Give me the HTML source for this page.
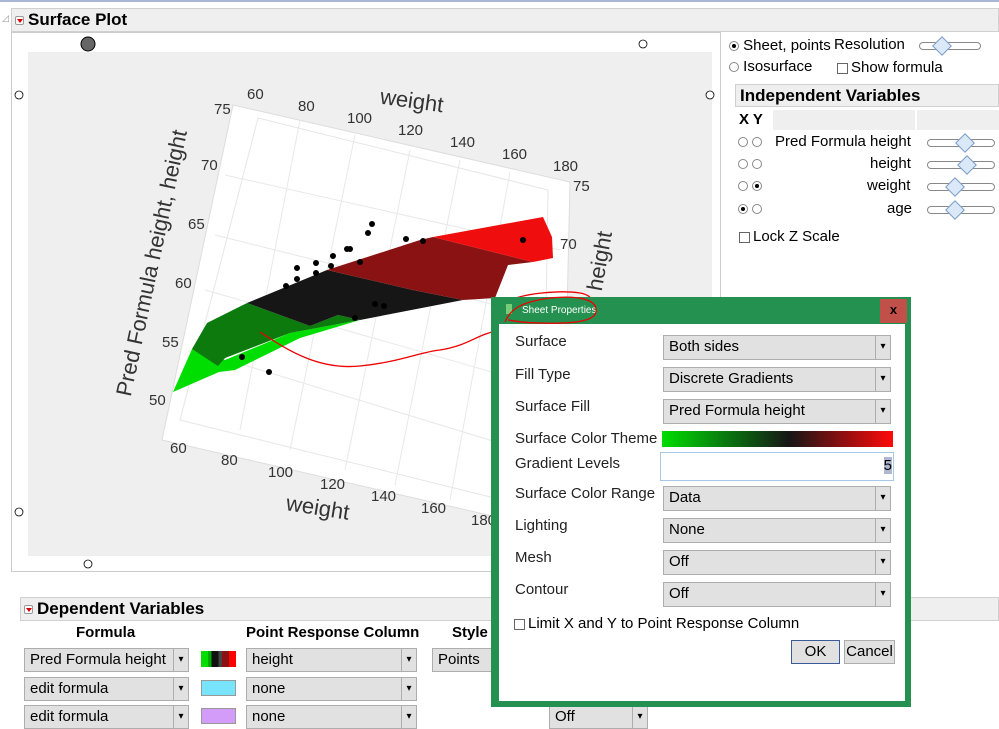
<!DOCTYPE html>
<html><head><meta charset="utf-8"><style>
*{box-sizing:border-box}
body{margin:0;width:999px;height:721px;overflow:hidden;background:#fff;font-family:"Segoe UI","Liberation Sans","DejaVu Sans",sans-serif;font-size:15px;color:#000;position:relative}
.a{position:absolute;white-space:nowrap}
.hdr{position:absolute;background:#efefef;border:1px solid #d0d0d0;font-weight:bold;font-size:17px;padding-left:16px;line-height:22px}
.tri{position:absolute;left:3px;top:7px;width:9px;height:9px;background:#fff;border:1px solid #999;border-radius:2px}
.tri:after{content:"";position:absolute;left:1px;top:2px;border-left:3px solid transparent;border-right:3px solid transparent;border-top:4px solid #d00}
.dd{position:absolute;background:#e1e1e1;border:1px solid #adadad;font-size:15px;line-height:22px;padding-left:5px;white-space:nowrap}
.dd:after{content:"▾";position:absolute;right:0;top:0;width:14px;height:100%;border-left:1px solid #adadad;font-size:10px;text-align:center;line-height:22px}
.lbl{position:absolute;left:515px;font-size:15px;color:#222;white-space:nowrap}
.rad{display:inline-block;width:10px;height:10px;border:1px solid #888;border-radius:50%;position:relative;vertical-align:middle}
.rad.on:after{content:"";position:absolute;left:2px;top:2px;width:4px;height:4px;border-radius:50%;background:#000}
.cb{display:inline-block;width:11px;height:11px;border:1px solid #666;vertical-align:middle;margin-right:3px}
.sl{position:absolute;height:8px;border:1px solid #888;border-radius:4px;background:#fff}
.dm{position:absolute;width:14px;height:14px;background:#dbe8f8;border:1px solid #7a9cc8;transform:rotate(45deg)}
.ax{position:absolute;font-size:15px;color:#333;white-space:nowrap}
</style></head><body>
<div class="a" style="left:0;top:0;width:999px;height:2px;background:#a9b5d6"></div>
<div class="hdr" style="left:11px;top:8px;width:988px;height:24px"><div class="tri"></div>Surface Plot</div>
<div class="a" style="left:2px;top:13px;font-size:9px;color:#999">◿</div>
<div class="a" style="left:11px;top:32px;width:710px;height:540px;border:1px solid #ccc"></div>
<div class="a" style="left:28px;top:52px;width:684px;height:504px;background:#efefef"></div>
<svg class="a" style="left:0;top:0" width="999" height="721">
<polygon points="233,105 570,182 562,532 162,440" fill="#fff" stroke="#ddd"/>
<polygon points="258,118 548,190 543,510 180,420" fill="none" stroke="#e6e6e6"/>
<g stroke="#e8e8e8" fill="none">
<line x1="300" y1="120" x2="240" y2="430"/><line x1="355" y1="135" x2="290" y2="450"/><line x1="410" y1="150" x2="345" y2="470"/><line x1="460" y1="160" x2="395" y2="485"/><line x1="510" y1="172" x2="450" y2="500"/>
<line x1="225" y1="175" x2="560" y2="250"/><line x1="215" y1="235" x2="555" y2="320"/><line x1="205" y1="290" x2="555" y2="390"/><line x1="195" y1="350" x2="555" y2="460"/>
</g>
<circle cx="88" cy="44" r="7" fill="#666" stroke="#000"/>
<g fill="#fff" stroke="#000" stroke-width="0.8"><circle cx="643" cy="44" r="4"/><circle cx="19" cy="95" r="4"/><circle cx="710" cy="95" r="4"/><circle cx="19" cy="512" r="4"/><circle cx="88" cy="564" r="4"/></g>
<polygon points="173,392 192,349 225,360 290,333 360,320 300,338 235,370 219,372" fill="#00dd00"/>
<polygon points="192,349 207,323 247,303 310,326 338,315 360,320 290,333 225,358 218,366" fill="#0c7a0c"/>
<polygon points="247,303 327,270 413,290 463,300 360,320 338,315 310,326" fill="#161616"/>
<polygon points="327,270 420,240 433,237 533,262 508,265 495,298 463,300 413,290" fill="#8b1212"/>
<polygon points="433,237 543,217 552,237 553,258 533,262" fill="#f00d0d"/>
<g fill="#000">
<circle cx="372" cy="224" r="3"/><circle cx="368" cy="233" r="3"/><circle cx="406" cy="239" r="3"/><circle cx="423" cy="241" r="3"/><circle cx="523" cy="240" r="3"/><circle cx="347" cy="249" r="3"/><circle cx="350" cy="249" r="3"/><circle cx="333" cy="256" r="3"/><circle cx="331" cy="266" r="3"/><circle cx="316" cy="263" r="3"/><circle cx="316" cy="273" r="3"/><circle cx="297" cy="268" r="3"/><circle cx="297" cy="279" r="3"/><circle cx="360" cy="262" r="3"/><circle cx="286" cy="286" r="3"/><circle cx="375" cy="304" r="3"/><circle cx="384" cy="306" r="3"/><circle cx="355" cy="318" r="3"/><circle cx="242" cy="357" r="3"/><circle cx="269" cy="372" r="3"/></g>
<path d="M260,332 C290,352 320,370 360,366 C400,362 420,352 440,350 C470,345 475,335 500,330 C520,325 560,325 585,320 C600,310 595,295 580,293 C560,290 520,293 505,303 C500,312 505,325 510,330" fill="none" stroke="#e00" stroke-width="1.3"/>
</svg>
<div class="ax" style="left:247px;top:86px">60</div><div class="ax" style="left:214px;top:101px">75</div>
<div class="ax" style="left:298px;top:98px">80</div><div class="ax" style="left:347px;top:110px">100</div><div class="ax" style="left:398px;top:122px">120</div><div class="ax" style="left:450px;top:134px">140</div><div class="ax" style="left:502px;top:146px">160</div><div class="ax" style="left:553px;top:158px">180</div><div class="ax" style="left:573px;top:178px">75</div>
<div class="ax" style="left:201px;top:157px">70</div><div class="ax" style="left:188px;top:216px">65</div><div class="ax" style="left:175px;top:275px">60</div><div class="ax" style="left:162px;top:334px">55</div><div class="ax" style="left:149px;top:392px">50</div><div class="ax" style="left:560px;top:236px">70</div>
<div class="ax" style="left:170px;top:440px">60</div><div class="ax" style="left:221px;top:452px">80</div><div class="ax" style="left:268px;top:464px">100</div><div class="ax" style="left:320px;top:476px">120</div><div class="ax" style="left:371px;top:488px">140</div><div class="ax" style="left:421px;top:500px">160</div><div class="ax" style="left:471px;top:512px">180</div>
<div class="ax" style="left:380px;top:88px;font-size:22px;transform:rotate(8deg)">weight</div>
<div class="ax" style="left:286px;top:495px;font-size:22px;transform:rotate(9deg)">weight</div>
<div class="ax" style="left:12px;top:250px;font-size:22px;transform:rotate(-78deg);transform-origin:center;width:280px;text-align:center">Pred Formula height, height</div>
<div class="ax" style="left:570px;top:248px;font-size:22px;transform:rotate(-80deg)">height</div>
<!-- right panel -->
<div class="a" style="left:729px;top:37px"><span class="rad on"></span> Sheet, points</div>
<div class="a" style="left:834px;top:36px">Resolution</div>
<div class="sl" style="left:919px;top:42px;width:62px"></div><div class="dm" style="left:935px;top:39px"></div>
<div class="a" style="left:729px;top:58px"><span class="rad"></span> Isosurface</div>
<div class="a" style="left:837px;top:59px"><span class="cb"></span>Show formula</div>
<div class="hdr" style="left:735px;top:84px;width:264px;height:23px;padding-left:4px">Independent Variables</div>
<div class="a" style="left:773px;top:110px;width:142px;height:20px;background:#efefef"></div>
<div class="a" style="left:917px;top:110px;width:82px;height:20px;background:#efefef"></div>
<div class="a" style="left:739px;top:111px;font-weight:bold">X Y</div>
<div class="a" style="left:738px;top:133px"><span class="rad"></span> <span class="rad"></span></div>
<div class="a" style="left:738px;top:155px"><span class="rad"></span> <span class="rad"></span></div>
<div class="a" style="left:738px;top:177px"><span class="rad"></span> <span class="rad on"></span></div>
<div class="a" style="left:738px;top:200px"><span class="rad on"></span> <span class="rad"></span></div>
<div class="a" style="left:775px;top:133px">Pred Formula height</div>
<div class="a" style="left:870px;top:155px">height</div>
<div class="a" style="left:867px;top:177px">weight</div>
<div class="a" style="left:887px;top:200px">age</div>
<div class="sl" style="left:927px;top:139px;width:68px"></div><div class="dm" style="left:958px;top:136px"></div>
<div class="sl" style="left:927px;top:161px;width:68px"></div><div class="dm" style="left:960px;top:158px"></div>
<div class="sl" style="left:927px;top:183px;width:68px"></div><div class="dm" style="left:948px;top:180px"></div>
<div class="sl" style="left:927px;top:206px;width:68px"></div><div class="dm" style="left:948px;top:203px"></div>
<div class="a" style="left:739px;top:228px"><span class="cb"></span>Lock Z Scale</div>
<!-- dependent -->
<div class="hdr" style="left:20px;top:597px;width:979px;height:24px"><div class="tri"></div>Dependent Variables</div>
<div class="a" style="left:76px;top:624px;font-weight:bold">Formula</div>
<div class="a" style="left:246px;top:624px;font-weight:bold">Point Response Column</div>
<div class="a" style="left:452px;top:624px;font-weight:bold">Style</div>
<div class="dd" style="left:24px;top:648px;width:165px;height:24px">Pred Formula height</div>
<div class="a" style="left:201px;top:651px;width:35px;height:16px;background:linear-gradient(90deg,#0d0 0 20%,#0a0 20% 30%,#111 30% 50%,#444 50% 60%,#8b1212 60% 80%,#f00 80%)"></div>
<div class="dd" style="left:246px;top:648px;width:171px;height:24px">height</div>
<div class="a" style="left:432px;top:648px;width:70px;height:24px;background:#e1e1e1;border:1px solid #adadad;padding-left:5px;line-height:22px">Points</div>
<div class="dd" style="left:24px;top:677px;width:165px;height:24px">edit formula</div>
<div class="a" style="left:201px;top:680px;width:35px;height:16px;background:#78e4fc;border:1px solid #999"></div>
<div class="dd" style="left:246px;top:677px;width:171px;height:24px">none</div>
<div class="dd" style="left:549px;top:677px;width:99px;height:24px">Off</div>
<div class="dd" style="left:24px;top:705px;width:165px;height:24px">edit formula</div>
<div class="a" style="left:201px;top:708px;width:35px;height:16px;background:#d39cf8;border:1px solid #999"></div>
<div class="dd" style="left:246px;top:705px;width:171px;height:24px">none</div>
<div class="dd" style="left:549px;top:705px;width:99px;height:24px">Off</div>
<!-- dialog -->
<div class="a" style="left:491px;top:297px;width:420px;height:410px;background:#249150"></div>
<div class="a" style="left:499px;top:324px;width:406px;height:377px;background:#fff"></div>
<div class="a" style="left:506px;top:304px;width:6px;height:10px;background:#7c7"></div>
<div class="a" style="left:522px;top:305px;font-size:10px;color:#fff">Sheet Properties</div>
<div class="a" style="left:880px;top:299px;width:27px;height:24px;background:#c2504a;color:#000;font-weight:bold;text-align:center;line-height:22px;font-size:13px">x</div>
<svg class="a" style="left:490px;top:290px" width="120" height="40"><path d="M15,32 C20,20 30,12 60,8 C90,5 108,10 106,22 C104,32 80,34 50,33 C30,33 20,30 18,30" fill="none" stroke="#e00" stroke-width="1.3"/></svg>
<div class="lbl" style="top:333px">Surface</div>
<div class="lbl" style="top:366px">Fill Type</div>
<div class="lbl" style="top:398px">Surface Fill</div>
<div class="lbl" style="top:430px">Surface Color Theme</div>
<div class="lbl" style="top:455px">Gradient Levels</div>
<div class="lbl" style="top:485px">Surface Color Range</div>
<div class="lbl" style="top:517px">Lighting</div>
<div class="lbl" style="top:549px">Mesh</div>
<div class="lbl" style="top:581px">Contour</div>
<div class="dd" style="left:663px;top:335px;width:228px;height:25px">Both sides</div>
<div class="dd" style="left:663px;top:367px;width:228px;height:25px">Discrete Gradients</div>
<div class="dd" style="left:663px;top:399px;width:228px;height:25px">Pred Formula height</div>
<div class="a" style="left:662px;top:431px;width:231px;height:16px;background:linear-gradient(90deg,#00dd00,#0a7010 30%,#161616 55%,#7d1010 75%,#ff0a0a)"></div>
<div class="a" style="left:660px;top:452px;width:234px;height:29px;border:1px solid #a8c8e8;text-align:right;padding-right:1px;line-height:26px"><span style="background:#b0b8d0">5</span></div>
<div class="dd" style="left:663px;top:486px;width:228px;height:25px">Data</div>
<div class="dd" style="left:663px;top:518px;width:228px;height:25px">None</div>
<div class="dd" style="left:663px;top:550px;width:228px;height:25px">Off</div>
<div class="dd" style="left:663px;top:582px;width:228px;height:25px">Off</div>
<div class="a" style="left:514px;top:615px"><span class="cb"></span>Limit X and Y to Point Response Column</div>
<div class="a" style="left:791px;top:640px;width:49px;height:24px;background:#e1e1e1;border:1px solid #3c5a9a;text-align:center;line-height:22px">OK</div>
<div class="a" style="left:844px;top:640px;width:51px;height:24px;background:#e1e1e1;border:1px solid #adadad;text-align:center;line-height:22px">Cancel</div>
</body></html>
